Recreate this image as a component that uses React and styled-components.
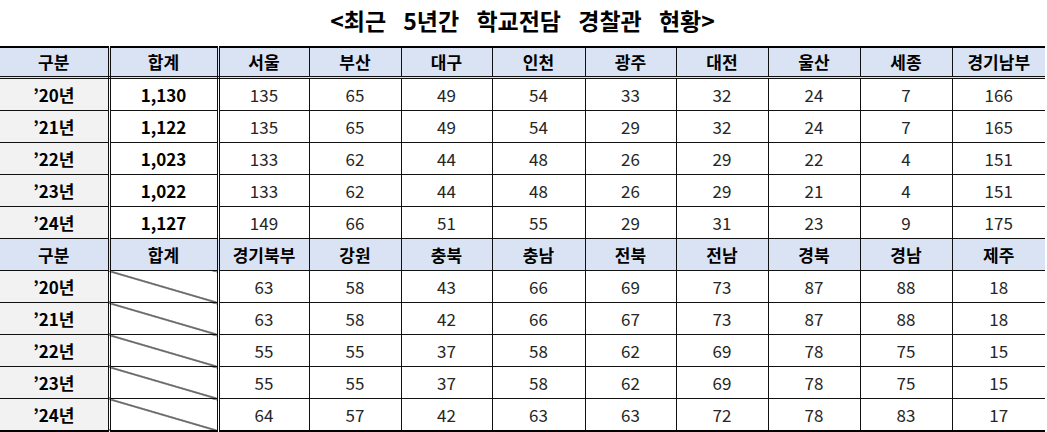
import React from "react";
import styled, { createGlobalStyle } from "styled-components";

const GlobalStyle = createGlobalStyle`
  body {
    margin: 0;
    background: #ffffff;
    font-family: "Noto Sans CJK KR", "Noto Sans", sans-serif;
  }
`;

const Page = styled.div`
  width: 1047px;
  padding-top: 4px;
`;

const Title = styled.h2`
  margin: 0 0 10px;
  height: 32px;
  line-height: 32px;
  text-align: center;
  font-size: 23px;
  font-weight: 700;
  color: #000;
  word-spacing: 12px;
  padding-right: 2px;
`;

const Table = styled.table`
  width: 1045px;
  border-collapse: collapse;
  table-layout: fixed;
  border-top: 2px solid #000;
  border-bottom: 2px solid #000;
`;

const Col = styled.col`
  width: ${(p) => p.$w}px;
`;

const Cell = styled.td`
  height: 31px;
  padding: 0;
  text-align: center;
  vertical-align: middle;
  font-size: 17px;
  line-height: 20px;
  color: ${(p) => (p.$bold ? "#000" : "#262626")};
  font-weight: ${(p) => (p.$bold ? 700 : 400)};
  border: 1px solid #111;
  border-left: ${(p) => (p.$first ? "none" : "1px solid #111")};
  border-right: ${(p) => (p.$double ? "3px double #111" : p.$last ? "none" : "1px solid #111")};
  background: ${(p) => (p.$head ? "#dae3f3" : p.$label ? "#f2f2f2" : "#fff")};
`;

const HeadRow = styled.tr`
  & > td {
    height: ${(p) => (p.$double ? 28 : 31)}px;
    border-bottom: ${(p) => (p.$double ? "3px double #111" : "1px solid #111")};
  }
`;

// empty 합계 cell crossed by a diagonal line
const Slash = styled(Cell)`
  background: linear-gradient(
    to top right,
    #fff calc(50% - 0.9px),
    #000 calc(50% - 0.2px),
    #000 calc(50% + 0.2px),
    #fff calc(50% + 0.9px)
  );
`;

const blocks = [
  {
    head: ["구분", "합계", "서울", "부산", "대구", "인천", "광주", "대전", "울산", "세종", "경기남부"],
    rows: [
      ["’20년", "1,130", 135, 65, 49, 54, 33, 32, 24, 7, 166],
      ["’21년", "1,122", 135, 65, 49, 54, 29, 32, 24, 7, 165],
      ["’22년", "1,023", 133, 62, 44, 48, 26, 29, 22, 4, 151],
      ["’23년", "1,022", 133, 62, 44, 48, 26, 29, 21, 4, 151],
      ["’24년", "1,127", 149, 66, 51, 55, 29, 31, 23, 9, 175],
    ],
  },
  {
    head: ["구분", "합계", "경기북부", "강원", "충북", "충남", "전북", "전남", "경북", "경남", "제주"],
    rows: [
      ["’20년", null, 63, 58, 43, 66, 69, 73, 87, 88, 18],
      ["’21년", null, 63, 58, 42, 66, 67, 73, 87, 88, 18],
      ["’22년", null, 55, 55, 37, 58, 62, 69, 78, 75, 15],
      ["’23년", null, 55, 55, 37, 58, 62, 69, 78, 75, 15],
      ["’24년", null, 64, 57, 42, 63, 63, 72, 78, 83, 17],
    ],
  },
];

const widths = [109, 109, 91, 92, 91, 93, 91, 92, 92, 92, 93];

const App = () => {
  return (
    <Page>
      <GlobalStyle />
      <Title>&lt;최근 5년간 학교전담 경찰관 현황&gt;</Title>
      <Table>
        <colgroup>
          {widths.map((w, i) => (
            <Col key={i} $w={w} />
          ))}
        </colgroup>
        <tbody>
          {blocks.map((block, b) => (
            <React.Fragment key={b}>
              <HeadRow $double={b === 0}>
                {block.head.map((h, i) => (
                  <Cell key={i} $head $bold $first={i === 0} $double={i < 2} $last={i === 10}>
                    {h}
                  </Cell>
                ))}
              </HeadRow>
              {block.rows.map((row, r) => (
                <tr key={r}>
                  {row.map((v, i) => {
                    if (i === 1 && v === null) {
                      return <Slash key={i} $double />;
                    }
                    return (
                      <Cell
                        key={i}
                        $label={i === 0}
                        $bold={i < 2}
                        $first={i === 0}
                        $double={i < 2}
                        $last={i === 10}
                      >
                        {v}
                      </Cell>
                    );
                  })}
                </tr>
              ))}
            </React.Fragment>
          ))}
        </tbody>
      </Table>
    </Page>
  );
};

export default App;
